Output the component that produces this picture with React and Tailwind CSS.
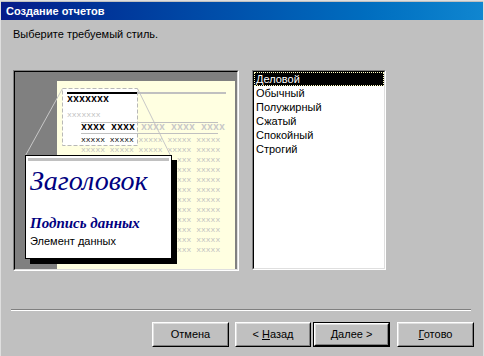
import React from 'react';

const styles = ['Деловой', 'Обычный', 'Полужирный', 'Сжатый', 'Спокойный', 'Строгий'];

const sunken = 'border-t border-l border-t-[#808080] border-l-[#808080] border-b border-r border-b-white border-r-white';
const sunkenInner = 'border-t border-l border-t-black border-l-black border-b border-r border-b-[#dfdfdf] border-r-[#dfdfdf]';

const Button = ({ children, def, w = 'w-[77px]' }) => {
  const face = (
    <div className="h-full border-t border-l border-t-white border-l-white border-b border-r border-b-black border-r-black">
      <div className="h-full flex items-center justify-center border-t border-l border-t-[#dfdfdf] border-l-[#dfdfdf] border-b border-r border-b-[#808080] border-r-[#808080] text-[11px] text-black">
        <span className="whitespace-pre">{children}</span>
      </div>
    </div>
  );
  if (def) {
    return <div className={`${w} h-[25px] border border-black`}>{face}</div>;
  }
  return <div className={`${w} h-[25px]`}>{face}</div>;
};

// строки под карточкой видны только справа от неё
const rowTops = [74, 84, 94, 104, 114, 124, 134, 144, 154, 164, 174];

// картинка предпросмотра стиля
const Preview = () => (
  <div className={`w-[226px] h-[201px] ${sunken}`}>
    <div className={`relative w-full h-full overflow-hidden bg-[#808080] ${sunkenInner}`}>
      <div className="absolute left-[42px] top-[9px] w-[178px] h-[190px] bg-[#ffffe1]" />
      <svg className="absolute left-0 top-0" width="222" height="197">
        <rect x="47.5" y="16.5" width="75" height="57" fill="#ffffff" stroke="#b8b8b8" strokeDasharray="4 2" />
        <line x1="47.5" y1="16.5" x2="10.5" y2="83.5" stroke="#c8c8c8" />
        <line x1="122.5" y1="16.5" x2="155.5" y2="83.5" stroke="#c8c8c8" />
      </svg>
      <div className="absolute left-[52px] top-[20px] w-[70px] h-[2px] bg-black" />
      <div className="absolute left-[122px] top-[20px] w-[89px] h-[2px] bg-[#c0c0c0]" />
      <div className="absolute left-[52px] top-[23px] font-['Liberation_Mono'] font-bold text-[10px] leading-[10px] text-black whitespace-pre">xxxxxxx</div>
      <div className="absolute left-[52px] top-[39px] font-['Liberation_Mono'] text-[8px] leading-[8px] text-[#c0c0c0] whitespace-pre">xxxxxxx</div>
      <div className="absolute left-[66px] top-[50px] w-[137px] h-px bg-[#c0c0c0]" />
      <div className="absolute left-[66px] top-[51px] font-['Liberation_Mono'] font-bold text-[10px] leading-[10px] whitespace-pre">
        <span className="text-black">xxxx xxxx</span>
        <span className="text-[#c8c8c8]"> xxxx xxxx xxxx</span>
      </div>
      <div className="absolute left-[66px] top-[61px] w-[137px] h-px bg-[#c0c0c0]" />
      <div className="absolute left-[66px] top-[64px] font-['Liberation_Mono'] text-[8px] leading-[8px] whitespace-pre">
        <span className="text-black">xxxxx xxxxx</span>
        <span className="text-[#c0c0c0]"> xxxxx xxxxx xxxxx</span>
      </div>
      {rowTops.map((t) =>
        t < 80 ? (
          <div
            key={t}
            className="absolute left-[66px] font-['Liberation_Mono'] text-[8px] leading-[8px] text-[#c0c0c0] whitespace-pre"
            style={{ top: t }}
          >
            xxxxx xxxxx xxxxx xxxxx xxxxx
          </div>
        ) : (
          <div
            key={t}
            className="absolute left-[162px] font-['Liberation_Mono'] text-[8px] leading-[8px] text-[#c0c0c0] whitespace-pre"
            style={{ top: t }}
          >
            xxx xxxxx
          </div>
        )
      )}
      <div className="absolute left-[10px] top-[83px] w-[147px] h-[104px] bg-white border border-black shadow-[5px_5px_0_#000] flex flex-col">
        <div className="mt-[2px] mx-[2px] h-[3px] bg-[#c0c0c0]" />
        <div className="mt-[6px] pl-[4px] h-[28px] font-['Liberation_Serif'] italic text-[28px] leading-[28px] text-[#000080]">
          Заголовок
        </div>
        <div className="mt-[21px] pl-[4px] font-['Liberation_Serif'] italic font-bold text-[15px] leading-[15px] text-[#000080]">
          Подпись данных
        </div>
        <div className="mt-[4px] pl-[4px] text-[11px] leading-[13px] text-black">Элемент данных</div>
      </div>
    </div>
  </div>
);

export default function App() {
  return (
    <div className="w-[484px] h-[356px] bg-[#c0c0c0] font-['Liberation_Sans',Arial,sans-serif] shadow-[inset_1px_1px_0_#dfdfdf,inset_-1px_0_0_#dfdfdf] flex flex-col overflow-hidden">
      <div className="mt-[2px] mx-[1px] h-[18px] bg-linear-to-r from-[#061a8a] to-[#1086d0] flex items-center pl-[5px]">
        <span className="text-white font-bold text-[11px] leading-none">Создание отчетов</span>
      </div>

      <div className="mt-[8px] pl-[13px] h-[13px] text-[11px] leading-[13px] text-black">Выберите требуемый стиль.</div>

      <div className="mt-[29px] flex items-start">
        <div className="ml-[13px]">
          <Preview />
        </div>
        <div className={`ml-[13px] w-[134px] h-[200px] ${sunken}`}>
          <div className={`w-full h-full bg-white ${sunkenInner}`}>
            {styles.map((s, i) => (
              <div
                key={s}
                className={
                  i === 0
                    ? 'h-[14px] pl-[1px] text-[11px] leading-[12px] bg-black text-white border border-dotted border-[#ffffc0]'
                    : 'h-[14px] pl-[2px] text-[11px] leading-[14px] text-black'
                }
              >
                {s}
              </div>
            ))}
          </div>
        </div>
      </div>

      <div className="mt-[38px] ml-[11px] w-[460px]">
        <div className="h-px bg-[#808080]" />
        <div className="h-px bg-white" />
      </div>

      <div className="mt-[11px] flex">
        <div className="ml-[152px]">
          <Button>Отмена</Button>
        </div>
        <div className="ml-[6px]">
          <Button w="w-[76px]">
            {'< '}
            <span className="underline">Н</span>азад
          </Button>
        </div>
        <div className="ml-[2px]">
          <Button def>
            <span className="underline">Д</span>
            {'алее >'}
          </Button>
        </div>
        <div className="ml-[7px]">
          <Button>
            <span className="underline">Г</span>отово
          </Button>
        </div>
      </div>
    </div>
  );
}
